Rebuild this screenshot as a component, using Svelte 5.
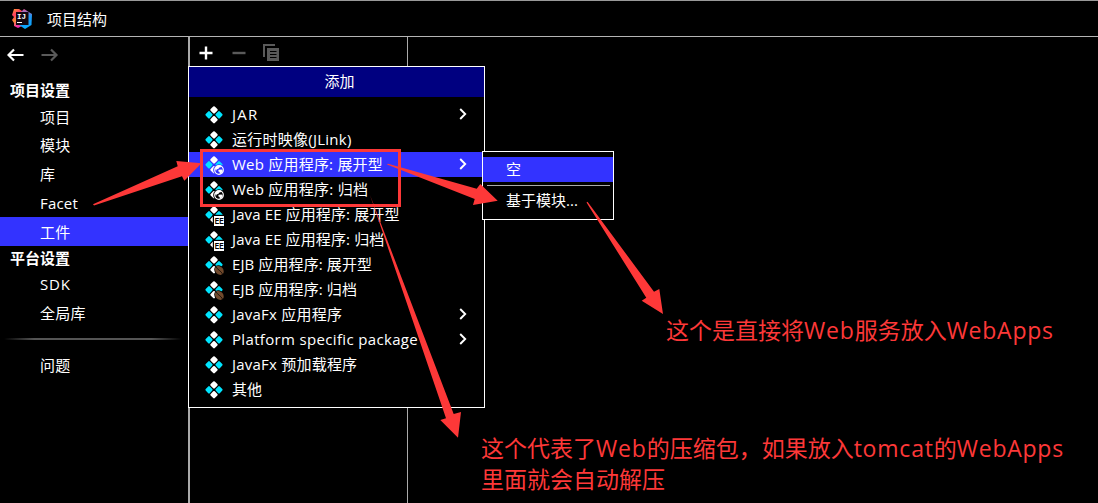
<script>
  const projectItems = ['项目', '模块', '库', 'Facet', '工件'];
  const platformItems = ['SDK', '全局库'];
  const menu = [
    { label: 'JAR', sub: true, track: 1.2 },
    { label: '运行时映像(JLink)', track: 0.25 },
    { label: 'Web 应用程序: 展开型', badge: 'web', sub: true, selected: true, track: 0.22 },
    { label: 'Web 应用程序: 归档', badge: 'web', track: 0.25 },
    { label: 'Java EE 应用程序: 展开型', badge: 'ee', track: 0.12 },
    { label: 'Java EE 应用程序: 归档', badge: 'ee', track: 0.12 },
    { label: 'EJB 应用程序: 展开型', badge: 'ejb', track: 0.1 },
    { label: 'EJB 应用程序: 归档', badge: 'ejb', track: 0.1 },
    { label: 'JavaFx 应用程序', sub: true, track: 0.22 },
    { label: 'Platform specific package', sub: true, track: 0.34 },
    { label: 'JavaFx 预加载程序', track: 0.22 },
    { label: '其他', track: 0 }
  ];
</script>

{#snippet artifact(badge, selected)}
  <svg class="artifact" width="22" height="25" viewBox="0 0 22 25">
    <g stroke-linejoin="round" stroke-width="2.2">
      <path d="M10 5.3 12.600 7.900 10 10.500 7.400 7.900Z M10 15.100 12.600 17.700 10 20.300 7.400 17.700Z" fill="#fff" stroke="#fff" />
      <path d="M5 10.200 7.500 12.800 5 15.400 2.500 12.800Z M15 10.200 17.500 12.800 15 15.400 12.500 12.800Z" fill="#00e5ff" stroke="#00e5ff" />
    </g>
    {#if badge === 'web'}
      <circle cx="15" cy="18" r="5.800" fill={selected ? '#3333ff' : '#000'} />
      <circle cx="15" cy="18" r="4.300" fill="none" stroke="#fff" stroke-width="1.200" />
      <path d="M10.800 16.500 13 14 16.500 13.500 17.200 15 15 15.800 14.400 17 12.800 17.200 12.200 18.800Z M14.600 17.800 17.600 17.600 19 19 17.200 21.600 15.800 22 15.600 20 14.200 19.200Z" fill="#fff" />
    {:else if badge === 'ee'}
      <rect x="8.800" y="12.800" width="13" height="12" fill="#000" />
      <rect x="10" y="14" width="10" height="10" fill="#fff" />
      <text x="10.700" y="22" textLength="9" lengthAdjust="spacingAndGlyphs" class="ee">EE</text>
    {:else if badge === 'ejb'}
      <g transform="rotate(-42 15.3 18.4)">
        <ellipse cx="15.3" cy="18.4" rx="4.600" ry="5.600" fill="#000" />
        <ellipse cx="15.3" cy="18.4" rx="3.900" ry="5" fill="#70492c" />
        <path d="M15.3 13.4C14.300 16 16.300 20 15.3 23.4" fill="none" stroke="#20140c" stroke-width=".9" />
      </g>
    {/if}
  </svg>
{/snippet}

<div class="window">
  <header>
    <svg width="22" height="22" viewBox="0 0 22 22">
      <defs>
        <linearGradient id="warm" x1="0" y1="0" x2="0.3" y2="1">
          <stop offset="0" stop-color="#ff9a2e" /><stop offset=".35" stop-color="#ff3b62" />
          <stop offset=".65" stop-color="#f98a32" /><stop offset="1" stop-color="#f12bb0" />
        </linearGradient>
        <linearGradient id="cool" x1="0" y1="0" x2="0" y2="1">
          <stop offset="0" stop-color="#e95498" /><stop offset=".35" stop-color="#1f98f5" /><stop offset="1" stop-color="#08a9ff" />
        </linearGradient>
      </defs>
      <path d="M3 1 8 1 11 3 11 18 7 20 3 18 3 15 1 12 3 9 1 7Z" fill="url(#warm)" />
      <path d="M10 4 13 1 21 6 20.500 17 14 21 8 17Z" fill="url(#cool)" />
      <rect x="5" y="4" width="12.500" height="13" fill="#120710" />
      <text x="6" y="10.500" class="ij">IJ</text>
      <rect x="6" y="14" width="5" height="1" fill="#fff" />
    </svg>
    <span>项目结构</span>
  </header>

  <div class="body">
    <nav>
      <div class="history">
        <svg width="18" height="14" viewBox="0 0 18 14"><path d="M16.500 7H1.500M7 1.500 1.500 7 7 12.500" fill="none" stroke="#fff" stroke-width="2.200" /></svg>
        <svg width="18" height="14" viewBox="0 0 18 14"><path d="M.5 7H15.500M10 1.500 15.500 7 10 12.500" fill="none" stroke="#5a5a5a" stroke-width="2.200" /></svg>
      </div>
      <h2>项目设置</h2>
      {#each projectItems as item}
        <div class="entry" class:active={item === '工件'}>{item}</div>
      {/each}
      <h2 class="platform">平台设置</h2>
      {#each platformItems as item}
        <div class="entry short" class:sdk={item === 'SDK'}>{item}</div>
      {/each}
      <div class="rule"></div>
      <div class="entry problems">问题</div>
    </nav>

    <section class="list">
      <div class="toolbar">
        <svg width="14" height="14" viewBox="0 0 14 14"><path d="M7 .5V13.5M.5 7H13.5" stroke="#fff" stroke-width="2.400" /></svg>
        <svg width="14" height="14" viewBox="0 0 14 14"><path d="M.5 7H13.5" stroke="#5a5a5a" stroke-width="2.400" /></svg>
        <svg width="16" height="17" viewBox="0 0 16 17">
          <path d="M1 13V1H12" fill="none" stroke="#5a5a5a" stroke-width="2" />
          <rect x="4" y="4" width="12" height="13" fill="#5a5a5a" />
          <path d="M7 7.5H13.500M7 10.500H13.500M7 13.500H13.500" stroke="#000" stroke-width="1.2" />
        </svg>
      </div>
    </section>
    <main></main>
  </div>

  <div class="popup">
    <div class="title">添加</div>
    <div class="items">
      {#each menu as item}
        <div class="item" class:selected={item.selected}>
          {@render artifact(item.badge, item.selected)}
          <span class="label" style:letter-spacing="{item.track}px">{item.label}</span>
          {#if item.sub}
            <svg class="chevron" width="8" height="12" viewBox="0 0 8 12"><path d="M1.200 1 6.200 6 1.200 11" fill="none" stroke="#fff" stroke-width="1.900" /></svg>
          {/if}
        </div>
      {/each}
    </div>
  </div>

  <div class="submenu">
    <div class="choice selected">空</div>
    <div class="line"></div>
    <div class="choice">基于模块...</div>
  </div>

  <svg class="marks" width="1098" height="503" viewBox="0 0 1098 503" fill="#fd3838">
    <rect x="201.500" y="150.500" width="198" height="55" fill="none" stroke="#fd3838" stroke-width="3" />
    <path d="M93 204.300 177.700 166.300 176.300 161 201.500 163.300 184.300 180.700 182 176.300 94 205.500Z" />
    <path d="M387 164.500 388 163.700 476.700 188.700 480.300 184 497.700 200.700 473 205 474.700 199Z" />
    <path d="M586.500 202.500 587.500 201.800 654 291.700 659.300 289 663 314 641.700 300.700 646.300 297.700Z" />
    <path d="M370 195 453.700 414 461 412 458 437.700 440.300 420 446 418.300Z" />
  </svg>
  <p class="note module">这个是直接将<span>Web</span>服务放入<span class="apps">WebApps</span></p>
  <p class="note archive">这个代表了<span>Web</span>的压缩包，如果放入<span>tomcat</span>的<span class="apps">WebApps</span><br />里面就会自动解压</p>
</div>

<style>
  :global(body) { background: #000; overflow: hidden; }
  .window {
    position: relative; box-sizing: border-box; width: 1098px; height: 503px;
    display: flex; flex-direction: column; overflow: hidden;
    border-top: 1px solid #999; background: #000; color: #fff;
    font: 15px/20px "Open Sans", "Noto Sans CJK SC", sans-serif;
  }
  header {
    box-sizing: border-box; height: 36px; display: flex; align-items: center; gap: 14px;
    padding: 1px 0 0 11px; border-bottom: 1px solid #b4b4b4;
  }
  .ij { font: bold 7.5px "Liberation Mono", monospace; fill: #fff; }
  .ee { font: bold 9.5px "Liberation Sans", sans-serif; fill: #000; }
  .body { flex: 1; display: flex; }
  nav { width: 188px; }
  .history { height: 41px; box-sizing: border-box; display: flex; gap: 16px; padding: 11px 0 0 7px; }
  h2 { margin: 0; padding-left: 10px; height: 24px; font-size: 15px; line-height: 24px; font-weight: 700; }
  .entry { height: 29px; padding-left: 40px; line-height: 31px; letter-spacing: .2px; }
  h2 + .entry { height: 28px; }
  .platform { height: 25px; }
  .active { background: #33f; }
  .short { line-height: 28px; }
  .sdk { line-height: 26px; letter-spacing: .8px; }
  .problems { line-height: 27px; }
  .rule { height: 2px; margin: 10px 6px 12px 4px; background: linear-gradient(90deg, #000, #555 17%, #555 83%, #000); }
  .list { box-sizing: border-box; width: 220px; border-left: 2px solid #aaa; border-right: 1px solid #aaa; }
  .toolbar { display: flex; align-items: center; gap: 19px; padding: 7px 0 0 9px; }
  .toolbar svg:last-child { margin-left: -2px; }
  .popup {
    position: absolute; left: 188px; top: 65px; box-sizing: border-box; width: 297px; height: 342px;
    border: 1px solid #fff; background: #000;
  }
  .title { height: 30px; line-height: 28px; padding-left: 6px; text-align: center; background: #000080; }
  .items { padding-top: 5px; }
  .item { height: 25px; display: flex; align-items: center; padding: 0 17px 0 15px; }
  .selected { background: #33f; }
  .label { flex: 1; margin-left: 6px; white-space: nowrap; line-height: 25px; }
  .artifact, .chevron { display: block; flex: none; }
  .chevron { margin-top: -1px; }
  .submenu {
    position: absolute; left: 482px; top: 150px; box-sizing: border-box; width: 132px; height: 69px;
    padding-top: 5px; border: 1px solid #fff; background: #000;
  }
  .choice { height: 25px; line-height: 25px; padding-left: 23px; }
  .line { height: 1px; margin: 3px 3px 2px 4px; background: #aaa; }
  .marks { position: absolute; left: 0; top: -1px; }
  .note { position: absolute; margin: 0; color: #fd3838; font-size: 23px; line-height: 31px; white-space: nowrap; }
  .note span { letter-spacing: .8px; }
  .note .apps { letter-spacing: .75px; }
  .module { left: 666px; top: 314px; }
  .archive { left: 481px; top: 432px; }
</style>
